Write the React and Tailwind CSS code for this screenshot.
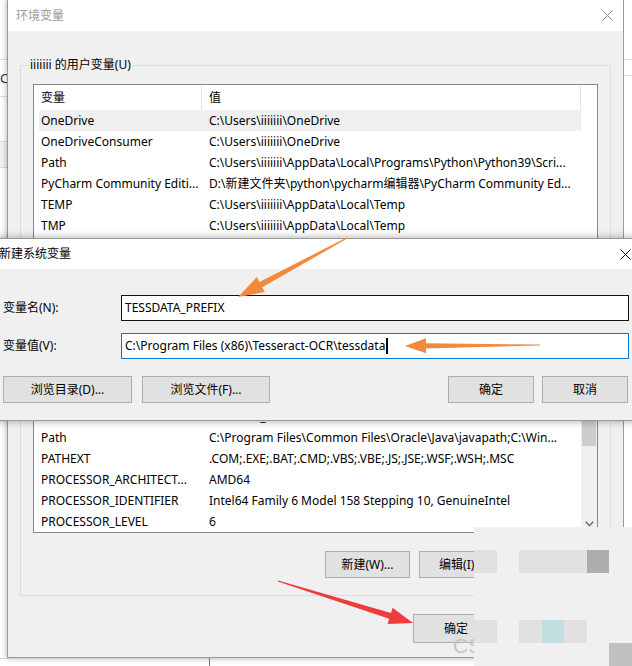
const USER_VARS = [
  ['OneDrive', 'C:\\Users\\iiiiiii\\OneDrive'],
  ['OneDriveConsumer', 'C:\\Users\\iiiiiii\\OneDrive'],
  ['Path', 'C:\\Users\\iiiiiii\\AppData\\Local\\Programs\\Python\\Python39\\Scri...'],
  ['PyCharm Community Editi...', 'D:\\新建文件夹\\python\\pycharm编辑器\\PyCharm Community Ed...'],
  ['TEMP', 'C:\\Users\\iiiiiii\\AppData\\Local\\Temp'],
  ['TMP', 'C:\\Users\\iiiiiii\\AppData\\Local\\Temp'],
];

const SYS_VARS = [
  ['', ''],
  ['OS', 'Windows_NT'],
  ['Path', 'C:\\Program Files\\Common Files\\Oracle\\Java\\javapath;C:\\Win...'],
  ['PATHEXT', '.COM;.EXE;.BAT;.CMD;.VBS;.VBE;.JS;.JSE;.WSF;.WSH;.MSC'],
  ['PROCESSOR_ARCHITECT...', 'AMD64'],
  ['PROCESSOR_IDENTIFIER', 'Intel64 Family 6 Model 158 Stepping 10, GenuineIntel'],
  ['PROCESSOR_LEVEL', '6'],
];

// mosaic cells, 7 x 6
const MOSAIC = [
  ['a', 'a', 'a', 'a', 'a', 'a', 'a'],
  ['b', 'a', 'b', 'b', 'b', 'd', 'a'],
  ['a', 'a', 'a', 'a', 'a', 'a', 'a'],
  ['a', 'a', 'a', 'a', 'a', 'a', 'a'],
  ['b', 'a', 'b', 't', 'b', 'a', 'a'],
  ['a', 'a', 'a', 'a', 'a', 'a', 'g'],
];
const CELL = {
  a: 'bg-[#f0f0f0]',
  b: 'bg-[#e1e1e1]',
  d: 'bg-[#adadad]',
  t: 'bg-[#c0dfdf]',
  g: 'bg-[#c0c0c0]',
};

function arrowPoints([tx, ty], [hx, hy], headLen, headHalf, tailHalf, neckHalf) {
  const dx = hx - tx, dy = hy - ty;
  const len = Math.hypot(dx, dy);
  const ux = dx / len, uy = dy / len;
  const nx = -uy, ny = ux;
  const bx = hx - ux * headLen, by = hy - uy * headLen;
  const pts = [
    [tx + nx * tailHalf, ty + ny * tailHalf],
    [bx + nx * neckHalf, by + ny * neckHalf],
    [bx + nx * headHalf, by + ny * headHalf],
    [hx, hy],
    [bx - nx * headHalf, by - ny * headHalf],
    [bx - nx * neckHalf, by - ny * neckHalf],
    [tx - nx * tailHalf, ty - ny * tailHalf],
  ];
  return pts.map((p) => p.map((v) => v.toFixed(1)).join(',')).join(' ');
}

function Btn({ children, className = '' }) {
  return (
    <div className={`flex items-center justify-center bg-[#e1e1e1] border border-[#adadad] text-[12px] text-black ${className}`}>
      {children}
    </div>
  );
}

function CloseX({ color = '#000', strokeWidth = 1 }) {
  return (
    <svg width="11" height="11" viewBox="0 0 11 11">
      <path d="M0.5 0.5 L10.5 10.5 M10.5 0.5 L0.5 10.5" stroke={color} strokeWidth={strokeWidth} fill="none" />
    </svg>
  );
}

function Row({ name, value, selected }) {
  return (
    <div className={`flex h-[21px] items-center text-[12px] text-black whitespace-nowrap ${selected ? 'bg-[#efefef]' : ''}`}>
      <div className="w-[163px] pl-[2px] overflow-hidden">{name}</div>
      <div className="pl-[7px] overflow-hidden">{value}</div>
    </div>
  );
}

export default function App() {
  return (
    <div className="relative w-[632px] h-[666px] overflow-hidden bg-white font-['Noto_Sans','Noto_Sans_CJK_SC',sans-serif]">
      <div className="flex h-[658px]">
        {/* window behind, left edge */}
        <div className="w-[7px] flex flex-col bg-white">
          <div className="h-[60px] border-b border-[#dcdcdc]" />
          <div className="h-[37px] border-b border-[#dcdcdc] text-[13px] leading-[37px] text-[#333]">CF</div>
          <div className="h-[45px] border-b border-[#dcdcdc]" />
          <div className="h-[26px] bg-[#f3f3f3] border-b border-[#dcdcdc]" />
          <div className="flex-1" />
        </div>

        {/* 环境变量 */}
        <div className="w-[617px] flex flex-col border border-t-0 border-[#9a9a9a] shadow-[0_0_6px_rgba(0,0,0,0.35)] bg-[#f0f0f0]">
          <div className="h-[31px] bg-white flex items-center justify-between pl-[8px] pr-[10px]">
            <span className="text-[12px] text-[#999]">环境变量</span>
            <CloseX color="#8a8a8a" />
          </div>

          <div className="flex-1 px-[12px] pt-[34px]">
            <div className="relative h-[531px] border border-[#dcdcdc] px-[12px] pt-[18px]">
              <span className="absolute -top-[9px] left-[8px] px-[1px] bg-[#f0f0f0] text-[12px] text-black leading-[16px]">
                iiiiiii 的用户变量(U)
              </span>

              {/* user variables list */}
              <div className="h-[170px] border border-[#828790] bg-white flex flex-col overflow-hidden">
                <div className="flex h-[25px] shrink-0 pl-[5px] text-[12px] text-black">
                  <div className="w-[163px] pl-[2px] flex items-center border-r border-[#e5e5e5]">变量</div>
                  <div className="w-[379px] pl-[7px] flex items-center border-r border-[#e5e5e5]">值</div>
                </div>
                <div className="pl-[5px] w-[547px]">
                  {USER_VARS.map(([n, v], i) => (
                    <Row key={i} name={n} value={v} selected={i === 0} />
                  ))}
                </div>
              </div>

              {/* system variables list */}
              <div className="mt-[130px] h-[149px] border border-[#828790] bg-white flex overflow-hidden">
                <div className="w-[547px] pl-[5px]">
                  {SYS_VARS.map(([n, v], i) => (
                    <Row key={i} name={n} value={v} />
                  ))}
                </div>
                <div className="flex-1 flex flex-col bg-[#f0f0f0]">
                  <div className="h-[17px]" />
                  <div className="h-[44px] mx-[1px] bg-[#cdcdcd]" />
                  <div className="flex-1" />
                  <div className="h-[17px] flex items-center justify-center">
                    <svg width="9" height="6" viewBox="0 0 9 6">
                      <path d="M0.8 0.8 L4.5 4.6 L8.2 0.8" stroke="#606060" strokeWidth="1.3" fill="none" />
                    </svg>
                  </div>
                </div>
              </div>

              <div className="mt-[18px] flex justify-end gap-[9px]">
                <Btn className="w-[85px] h-[27px]">新建(W)...</Btn>
                <Btn className="w-[85px] h-[27px]">编辑(I)...</Btn>
                <Btn className="w-[85px] h-[27px]">删除(L)</Btn>
              </div>
            </div>

            <div className="mt-[18px] flex justify-end gap-[10px] pr-[16px]">
              <Btn className="w-[86px] h-[29px]">确定</Btn>
              <Btn className="w-[86px] h-[29px]">取消</Btn>
            </div>
          </div>
        </div>

        {/* window behind, right edge */}
        <div className="flex-1 flex flex-col bg-white">
          <div className="h-[60px] border-b border-[#dcdcdc]" />
          <div className="h-[16px] border-b border-[#dcdcdc]" />
          <div className="flex-1" />
        </div>
      </div>

      {/* bottom strip */}
      <div className="h-[8px] flex">
        <div className="w-[209px] border-t border-[#d0d0d0]" />
        <div className="w-px bg-[#777]" />
        <div className="flex-1" />
      </div>

      {/* 新建系统变量 */}
      <div className="absolute left-[-10px] top-[238px] w-[660px] h-[183px] flex flex-col border border-[#9a9a9a] bg-[#f0f0f0] shadow-[0_0_8px_rgba(0,0,0,0.35)]">
        <div className="h-[30px] bg-white flex items-center justify-between pl-[8px] pr-[18px]">
          <span className="text-[12px] text-black">新建系统变量</span>
          <CloseX color="#000" />
        </div>
        <div className="flex-1 pl-[12px] pt-[26px] flex flex-col">
          <div className="flex items-center h-[26px]">
            <span className="w-[118px] text-[12px] text-black">变量名(N):</span>
            <div className="w-[508px] h-[26px] border border-[#111] bg-white flex items-center pl-[3px] text-[12px] text-black">
              TESSDATA_PREFIX
            </div>
          </div>
          <div className="flex items-center h-[26px] mt-[12px]">
            <span className="w-[118px] text-[12px] text-black">变量值(V):</span>
            <div className="w-[508px] h-[26px] border border-[#0078d7] bg-white flex items-center pl-[3px] text-[12px] text-black">
              C:\Program Files (x86)\Tesseract-OCR\tessdata
              <span className="ml-px w-[2px] h-[16px] bg-black" />
            </div>
          </div>
          <div className="flex mt-[17px] h-[27px]">
            <Btn className="w-[129px] h-[27px]">浏览目录(D)...</Btn>
            <Btn className="ml-[10px] w-[128px] h-[27px]">浏览文件(F)...</Btn>
            <Btn className="ml-[178px] w-[86px] h-[27px]">确定</Btn>
            <Btn className="ml-[8px] w-[86px] h-[27px]">取消</Btn>
          </div>
        </div>
      </div>

      {/* watermark */}
      <span className="absolute left-[453px] top-[635px] text-[21px] leading-[21px] text-[#c4c4c4] font-['Liberation_Sans',sans-serif]">
        CSDN
      </span>

      {/* mosaic */}
      <div className="absolute left-[474px] top-[527px] w-[158px] h-[139px] grid grid-cols-7 grid-rows-6">
        {MOSAIC.flat().map((c, i) => (
          <div key={i} className={CELL[c]} />
        ))}
      </div>

      {/* arrows */}
      <svg className="absolute inset-0 pointer-events-none" width="632" height="666" viewBox="0 0 632 666">
        <polygon points={arrowPoints([347, 238], [238, 297], 26, 8.5, 0.6, 3)} fill="#f28a3e" />
        <polygon points={arrowPoints([540, 345], [405, 346], 21, 7.5, 0.5, 2.6)} fill="#f28a3e" />
        <polygon points={arrowPoints([278, 581], [413, 623], 24, 8.5, 0.6, 3)} fill="#ee3b3b" />
      </svg>
    </div>
  );
}
